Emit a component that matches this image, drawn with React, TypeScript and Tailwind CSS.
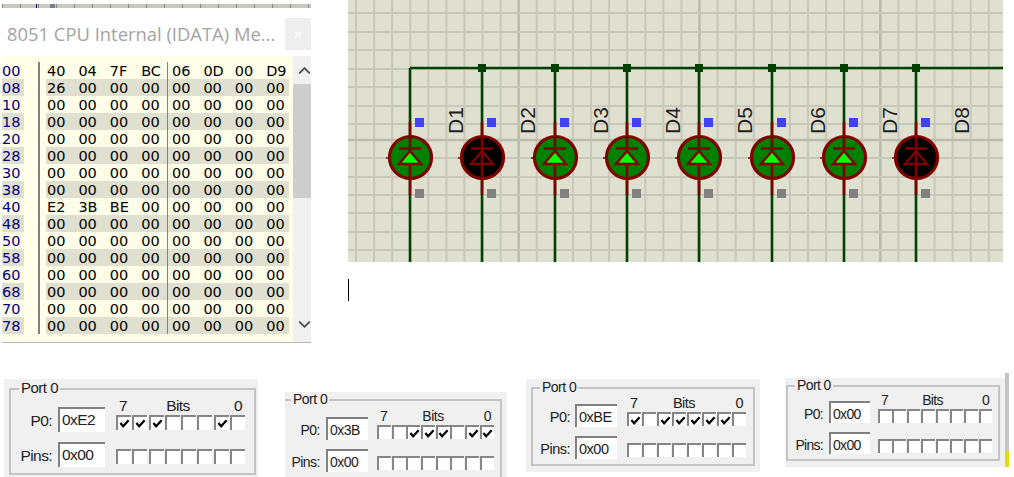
import { ChevronDown, ChevronUp } from 'lucide-react';

const addresses = ['00', '08', '10', '18', '20', '28', '30', '38', '40', '48', '50', '58', '60', '68', '70', '78'];

const zeros = ['00', '00', '00', '00', '00', '00', '00', '00'];
const memory = addresses.map((_, i) => {
    if (i === 0) return ['40', '04', '7F', 'BC', '06', '0D', '00', 'D9'];
    if (i === 1) return ['26', '00', '00', '00', '00', '00', '00', '00'];
    if (i === 8) return ['E2', '3B', 'BE', '00', '00', '00', '00', '00'];
    return zeros;
});

const leds = [
    { x: 62, name: 'D1', lit: true },
    { x: 134, name: 'D2', lit: false },
    { x: 207, name: 'D3', lit: true },
    { x: 279, name: 'D4', lit: true },
    { x: 351, name: 'D5', lit: true },
    { x: 424, name: 'D6', lit: true },
    { x: 496, name: 'D7', lit: true },
    { x: 568, name: 'D8', lit: false },
];

const gridX = Array.from({ length: 36 }, (_, i) => 8 + i * 18.08);
const gridY = [13, 32, 50, 69, 87, 106, 124, 140, 158, 177, 195, 213, 232, 250];

const ports = [
    {
        value: '0xE2',
        bits: [1, 1, 1, 0, 0, 0, 1, 0],
        panel: 'mt-px w-[254px] h-[98px] mr-[27px]',
        group: 'ml-[5px] mt-[9px] w-[247px] h-[87px] pt-[17px]',
        legend: 'left-[8px] text-[15px] tracking-[-0.5px]',
        text: 'text-[15.5px] tracking-[-0.6px]',
        label: 'w-[41px] mr-[6px]',
        input: 'w-[47px] h-[25px]',
        rowGap: 'mt-[8px]',
        bitsBox: 'ml-[11px] w-[129px]',
        boxes: 'gap-[1.3px]',
        box: 'w-[15px] h-[15px]',
    },
    {
        value: '0x3B',
        bits: [0, 0, 1, 1, 1, 0, 1, 1],
        panel: 'mt-[14px] w-[222px] h-[85px] mr-[19px]',
        group: 'ml-0 mt-[7px] w-[217px] h-[90px] pt-[16px] border-l-0',
        legend: 'left-[6px] text-[14px] tracking-[-0.5px]',
        text: 'text-[14px] tracking-[-0.5px]',
        label: 'w-[35px] mr-[6px]',
        input: 'w-[42px] h-[23px]',
        rowGap: 'mt-[5px]',
        bitsBox: 'ml-[9px] w-[117px]',
        boxes: 'gap-[0.7px]',
        box: 'w-[14px] h-[14px]',
    },
    {
        value: '0xBE',
        bits: [1, 0, 1, 1, 1, 1, 1, 0],
        panel: 'mt-px w-[234px] h-[93px] mr-[25px]',
        group: 'ml-[5px] mt-[8px] w-[224px] h-[79px] pt-[15px]',
        legend: 'left-[7px] text-[14px] tracking-[-0.5px]',
        text: 'text-[14.5px] tracking-[-0.5px]',
        label: 'w-[37px] mr-[5px]',
        input: 'w-[42px] h-[23px]',
        rowGap: 'mt-[5px]',
        bitsBox: 'ml-[10px] w-[119px]',
        boxes: 'gap-[1px]',
        box: 'w-[14px] h-[14px]',
    },
    {
        value: '0x00',
        bits: [0, 0, 0, 0, 0, 0, 0, 0],
        panel: 'mt-0 w-[220px] h-[89px]',
        group: 'ml-px mt-[7px] w-[214px] h-[76px] pt-[14px]',
        legend: 'left-[7px] text-[14px] tracking-[-0.6px]',
        text: 'text-[14px] tracking-[-0.7px]',
        label: 'w-[35px] mr-[6px]',
        input: 'w-[41px] h-[22px]',
        rowGap: 'mt-[4px]',
        bitsBox: 'ml-[8px] w-[114px]',
        boxes: 'gap-[0.9px]',
        box: 'w-[13.5px] h-[13.5px]',
    },
];

type Port = (typeof ports)[number];

function BitBox({ checked, className }: { checked?: boolean; className: string }) {
    return (
        <div className={`${className} shrink-0 border-t-2 border-l-2 border-[#858585] bg-white flex items-center justify-center`}>
            {checked && (
                <svg viewBox="0 0 12 12" className="w-[11px] h-[11px]">
                    <path d="M1.5 5.5 L4.5 9 L10.5 2.5" fill="none" stroke="#000" strokeWidth="2.4" />
                </svg>
            )}
        </div>
    );
}

function PortPanel({ port }: { port: Port }) {
    return (
        <div className={`${port.panel} bg-[#f0f0f0] overflow-hidden shrink-0 text-[#222] font-['Liberation_Sans',Arial,sans-serif]`}>
            <div className={`${port.group} relative border-2 border-[#c4c4c4]`}>
                <div className={`${port.legend} absolute -top-[10px] bg-[#f0f0f0] px-[2px] leading-[16px]`}>Port 0</div>

                <div className={`flex items-start ${port.text}`}>
                    <div className={`${port.label} text-right leading-[27px]`}>P0:</div>
                    <div className={`${port.input} border-t-2 border-l-2 border-[#808080] bg-white pl-[2px] leading-[22px]`}>
                        {port.value}
                    </div>
                    <div className={`${port.bitsBox} flex flex-col`}>
                        <div className="flex justify-between h-[17px] -mt-[9px] px-[3px] leading-[16px]">
                            <span>7</span>
                            <span className="mr-[5px]">Bits</span>
                            <span>0</span>
                        </div>
                        <div className={`flex ${port.boxes}`}>
                            {port.bits.map((bit, i) => (
                                <BitBox key={i} checked={bit === 1} className={port.box} />
                            ))}
                        </div>
                    </div>
                </div>

                <div className={`flex items-start ${port.rowGap} ${port.text}`}>
                    <div className={`${port.label} text-right leading-[27px]`}>Pins:</div>
                    <div className={`${port.input} border-t-2 border-l-2 border-[#808080] bg-white pl-[2px] leading-[22px]`}>
                        0x00
                    </div>
                    <div className={`${port.bitsBox} flex ${port.boxes} mt-[7px]`}>
                        {zeros.map((_, i) => (
                            <BitBox key={i} className={port.box} />
                        ))}
                    </div>
                </div>
            </div>
        </div>
    );
}

function MemoryPanel() {
    return (
        <div className="w-[311px] h-[343px] shrink-0 overflow-hidden flex flex-col">
            {/* bit of the schematic ruler that was caught in the crop */}
            <div className="mt-[4px] ml-[2px] h-[4px] flex bg-[#c8c8bc] bg-[repeating-linear-gradient(90deg,#8a8a80_0_1px,transparent_1px_18px)]">
                <div className="ml-[34px] w-[1px] bg-[#000080]" />
                <div className="ml-[13px] w-[5px] bg-[#70809a]" />
            </div>

            <div className="mt-[10px] h-[32px] flex items-center justify-between">
                <div className="pl-[7px] text-[18.4px] text-[#a3a3a3] font-['Open_Sans',sans-serif] whitespace-nowrap">
                    8051 CPU Internal (IDATA) Me...
                </div>
                <div className="w-[26px] h-[32px] shrink-0 bg-[#eeeeee] text-white text-[15px] flex items-center justify-center">
                    ×
                </div>
            </div>

            <div className="mt-[6px] h-[286px] flex font-['DejaVu_Sans',Verdana,sans-serif] text-[14.5px]">
                <div className="ml-[2px] w-[291px] bg-[#ffffe9] pt-[6px] flex items-start">
                    <div className="w-[22px]">
                        {addresses.map((address, i) => (
                            <div
                                key={address}
                                className={`h-[17px] leading-[19px] text-[#000080] ${i % 2 ? 'bg-[#e0e0d0]' : ''}`}
                            >
                                {address}
                            </div>
                        ))}
                    </div>
                    <div className="ml-[14px] w-[2px] h-[272px] bg-[#808080]" />
                    <div className="ml-[6px] w-[243px]">
                        {memory.map((row, i) => (
                            <div
                                key={addresses[i]}
                                className={`h-[17px] leading-[19px] text-black flex ${i % 2 ? 'bg-[#e0e0d0]' : ''}`}
                            >
                                <div className="w-[122px] flex border-r border-[#808080]">
                                    {row.slice(0, 4).map((cell, c) => (
                                        <span key={c} className="w-[31.4px] pl-[1px] shrink-0">
                                            {cell}
                                        </span>
                                    ))}
                                </div>
                                <div className="flex">
                                    {row.slice(4).map((cell, c) => (
                                        <span key={c} className="w-[31.4px] pl-[4px] shrink-0">
                                            {cell}
                                        </span>
                                    ))}
                                </div>
                            </div>
                        ))}
                    </div>
                </div>

                <div className="w-[18px] bg-[#f0f0f0] flex flex-col">
                    <div className="h-[28px] flex items-center justify-end">
                        <ChevronUp size={19} strokeWidth={2.4} className="text-[#505050] shrink-0 -mr-[3px]" />
                    </div>
                    <div className="h-[114px] bg-[#cdcdcd]" />
                    <div className="mt-auto h-[36px] flex items-center justify-end">
                        <ChevronDown size={19} strokeWidth={2.4} className="text-[#505050] shrink-0 -mr-[3px]" />
                    </div>
                </div>
            </div>

            <div className="ml-[2px] h-[1px] bg-[#b8b8b8]" />
        </div>
    );
}

function Schematic() {
    return (
        <svg viewBox="0 0 655 262" className="w-[655px] h-[262px] block bg-[#e0e0d0]">
            {gridX.map((x, i) => (
                <line
                    key={i}
                    x1={x}
                    x2={x}
                    y1={0}
                    y2={262}
                    stroke={i === 9 || i === 19 || i === 29 ? '#bcbcac' : '#c8c8b8'}
                    strokeWidth={i === 9 || i === 19 || i === 29 ? 2.6 : 2}
                />
            ))}
            {gridY.map((y) => (
                <line
                    key={y}
                    x1={0}
                    x2={655}
                    y1={y}
                    y2={y}
                    stroke={y === 140 ? '#bcbcac' : '#c8c8b8'}
                    strokeWidth={y === 140 ? 2.6 : 2}
                />
            ))}

            <path d="M62 68 H655" stroke="#004000" strokeWidth="2.4" fill="none" />

            {leds.map((led) => (
                <g key={led.name}>
                    <line x1={led.x} x2={led.x} y1={68} y2={262} stroke="#004000" strokeWidth="2.6" />
                    {led.x !== 62 && <rect x={led.x - 4} y={64} width={8} height={8} fill="#004000" />}
                    <line x1={led.x} x2={led.x} y1={122} y2={195} stroke="#800000" strokeWidth="2.6" />
                    <circle cx={led.x + 0.5} cy={157.5} r={21} fill={led.lit ? '#008000' : '#000000'} stroke="#800000" strokeWidth="3.2" />
                    <line x1={led.x - 24} x2={led.x - 20} y1={158} y2={158} stroke="#800000" strokeWidth="1.5" />
                    <line x1={led.x} x2={led.x} y1={136} y2={178} stroke="#800000" strokeWidth="2.6" />
                    <line x1={led.x - 11} x2={led.x + 11} y1={148.5} y2={148.5} stroke="#800000" strokeWidth="2.4" />
                    <path
                        d={`M${led.x} 151 L${led.x + 11} 164 H${led.x - 11} Z`}
                        fill={led.lit ? '#00ff00' : 'none'}
                        stroke="#800000"
                        strokeWidth="2.4"
                    />
                    <rect x={led.x + 5} y={118} width={9} height={9} fill="#4040ff" />
                    <rect x={led.x + 5} y={189} width={9} height={9} fill="#808080" />
                    <text
                        x={led.x + 53}
                        y={134}
                        transform={`rotate(-90 ${led.x + 53} 134)`}
                        fontFamily="Liberation Sans, Arial, sans-serif"
                        fontSize="21"
                        fill="#222"
                    >
                        {led.name}
                    </text>
                </g>
            ))}
        </svg>
    );
}

export default function App() {
    return (
        <div className="w-[1014px] h-[477px] bg-white overflow-hidden flex flex-col">
            <div className="flex items-start">
                <MemoryPanel />
                <div className="ml-[37px]">
                    <Schematic />
                    {/* text cursor left in the screenshot */}
                    <div className="mt-[17px] w-[1px] h-[22px] bg-black" />
                </div>
            </div>

            <div className="mt-[35px] pl-[4px] flex items-start">
                {ports.map((port, i) => (
                    <PortPanel key={i} port={port} />
                ))}
                <div className="-mt-[5px] w-[4px] flex flex-col">
                    <div className="h-[78px] bg-[#c4c4c4]" />
                    <div className="h-[16px] bg-[#e0e000]" />
                </div>
            </div>
        </div>
    );
}
